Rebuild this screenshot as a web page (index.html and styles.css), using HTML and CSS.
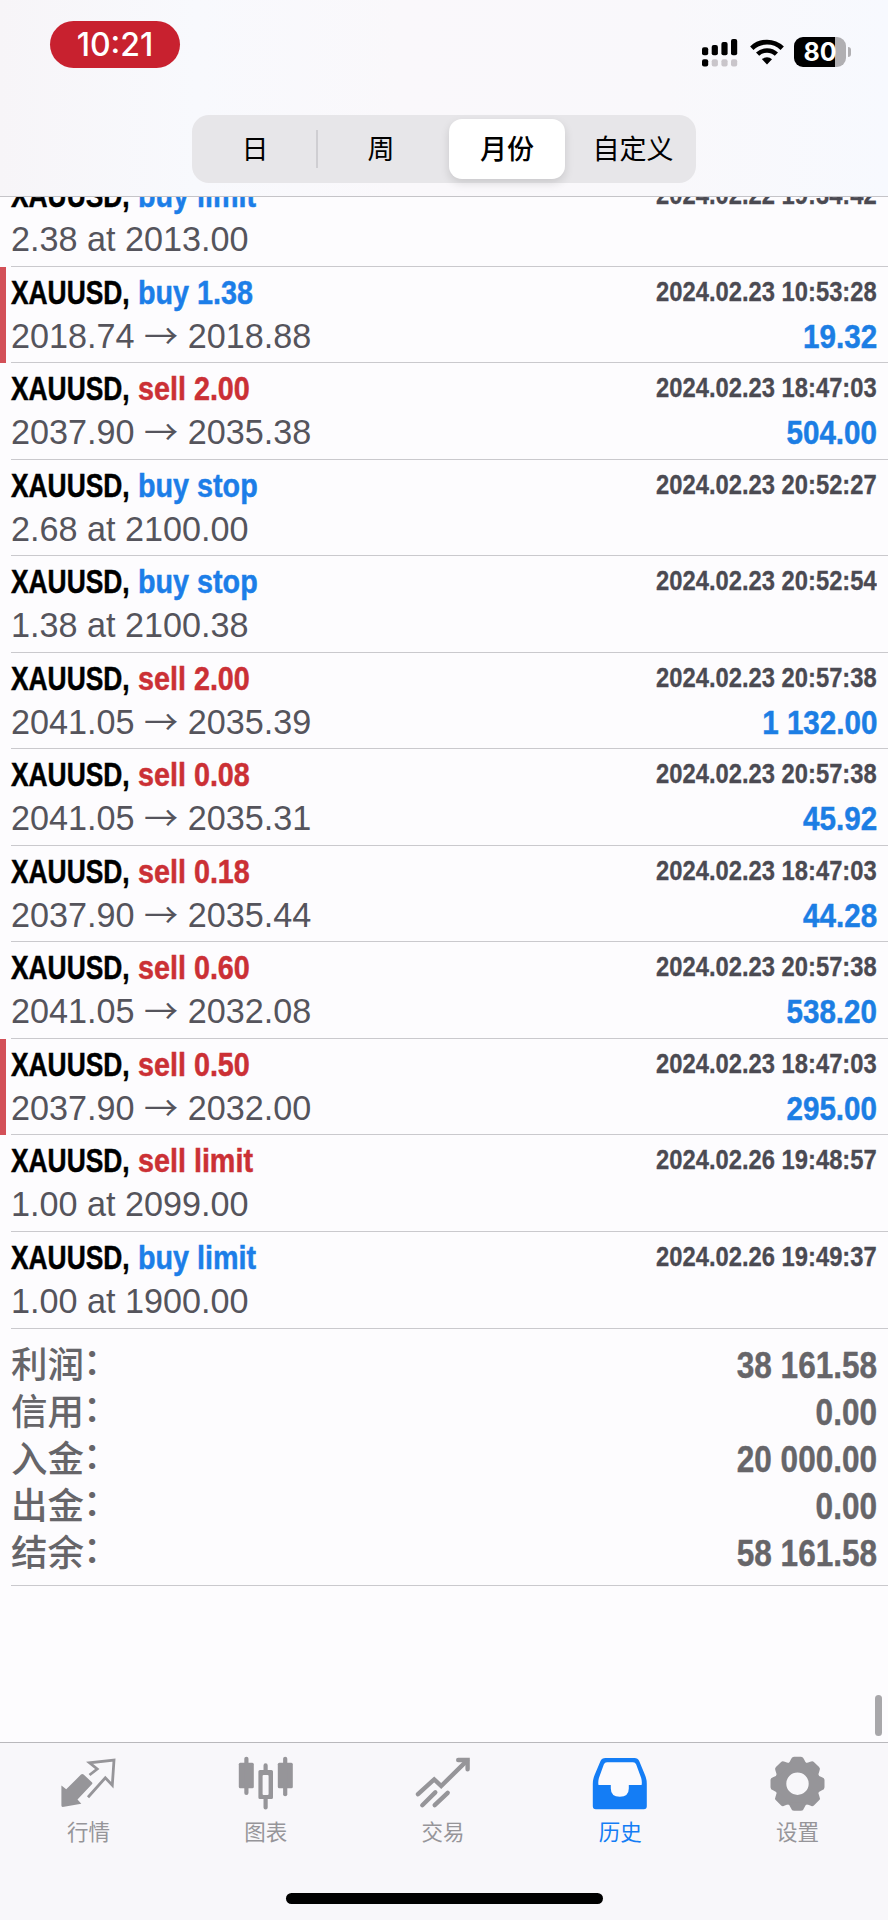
FILE: index.html
```
<!DOCTYPE html>
<html lang="zh-CN">
<head>
    <meta charset="UTF-8">
    <meta name="viewport" content="width=device-width, initial-scale=1.0">
    <title>历史</title>
    <link rel="stylesheet" href="styles.css">
</head>
<body>
    <div class="screen">
        <header class="header">
            <div class="status-bar">
                <div class="clock">10:21</div>
                <div class="status-icons">
                    <svg class="signal" width="36" height="28" viewBox="0 0 36 28">
                        <rect x="0" y="8.3" width="6.2" height="8" rx="2"/>
                        <rect x="9.7" y="6" width="6.2" height="10.3" rx="2"/>
                        <rect x="19.4" y="3" width="6.2" height="13.3" rx="2"/>
                        <rect x="29" y="0" width="6.2" height="16.3" rx="2"/>
                        <rect x="0" y="20.3" width="6.2" height="7.3" rx="2"/>
                        <g fill="#c9c5ca">
                            <rect x="9.7" y="20.3" width="6.2" height="7.3" rx="2"/>
                            <rect x="19.4" y="20.3" width="6.2" height="7.3" rx="2"/>
                            <rect x="29" y="20.3" width="6.2" height="7.3" rx="2"/>
                        </g>
                    </svg>
                    <svg class="wifi" width="34" height="26" viewBox="0 0 34 26">
                        <path d="M1.8 9.2a21.8 21.8 0 0 1 30.4 0" fill="none" stroke="#000" stroke-width="4.8"/>
                        <path d="M7.6 15.2a13.6 13.6 0 0 1 18.8 0" fill="none" stroke="#000" stroke-width="4.6"/>
                        <path d="M17 25.4l-5-5.2a7.4 7.4 0 0 1 10 0z"/>
                    </svg>
                    <div class="battery"><span>80</span></div>
                    <div class="battery-cap"></div>
                </div>
            </div>
            <div class="segments">
                <div class="segment">日</div>
                <div class="segment divided">周</div>
                <div class="segment selected">月份</div>
                <div class="segment">自定义</div>
            </div>
        </header>

        <main class="history">
            <div class="deals" id="deals"></div>
            <div class="summary">
                <div class="summary-row"><span>利润<i>：</i></span><b>38 161.58</b></div>
                <div class="summary-row"><span>信用<i>：</i></span><b>0.00</b></div>
                <div class="summary-row"><span>入金<i>：</i></span><b>20 000.00</b></div>
                <div class="summary-row"><span>出金<i>：</i></span><b>0.00</b></div>
                <div class="summary-row"><span>结余<i>：</i></span><b>58 161.58</b></div>
            </div>
            <div class="scrollbar"></div>
        </main>

        <nav class="tab-bar">
            <div class="tabs">
                <div class="tab">
                    <svg width="56" height="56" viewBox="0 0 56 56">
                        <path d="M28.5 19l7.7-6-7.7-6.2L53 4l-1.7 25.2-7-7.4L27 41.2" fill="none" stroke="currentColor" stroke-width="2.8"/>
                        <path d="M20 18.6q1.4-1 2.6 0l8.3 7.6q1 1 0 2L16.5 43.6l3.8 4.2L1.6 51q-1.2 0-1.2-1.4V29.5l4.8 3.8z" fill="currentColor"/>
                    </svg>
                    <span>行情</span>
                </div>
                <div class="tab">
                    <svg width="56" height="56" viewBox="0 0 56 56" fill="currentColor">
                        <rect x=".8" y="6.7" width="15" height="25.6" rx="1.5"/>
                        <rect x="6.3" y=".7" width="4.2" height="38.3" rx="2.1"/>
                        <path fill-rule="evenodd" d="M22 14h11.4q1.6 0 1.6 1.6v25.8q0 1.6-1.6 1.6H22q-1.6 0-1.6-1.6V15.6q0-1.6 1.6-1.6zm3.6 5q-1 0-1 1v18q0 1 1 1h4q1 0 1-1V20q0-1-1-1z"/>
                        <path d="M25.5 15V9.4a2.1 2.1 0 0 1 4.2 0V15zM25.5 42v9.4a2.1 2.1 0 0 0 4.2 0V42z"/>
                        <rect x="39.8" y="6.7" width="15" height="25.6" rx="1.5"/>
                        <rect x="45.1" y=".7" width="4.2" height="39.6" rx="2.1"/>
                    </svg>
                    <span>图表</span>
                </div>
                <div class="tab">
                    <svg width="56" height="56" viewBox="0 0 56 56" fill="none" stroke="currentColor" stroke-width="4.4" stroke-linecap="round">
                        <path d="M3 38.2L19.2 23.4l7 6.6L52 4.6"/>
                        <path d="M43.2 4h9.4v9.2"/>
                        <path d="M7.3 49.2L20.3 36.4M19.7 49.2l13-12.4"/>
                    </svg>
                    <span>交易</span>
                </div>
                <div class="tab active">
                    <svg width="56" height="56" viewBox="0 0 56 56">
                        <path fill="currentColor" d="M13.5 2h29q3.3 0 4.8 3.2l5.6 13.5q1.9 4.4 1.9 9v22.6q0 3-3 3H3.8q-3 0-3-3V27.7q0-4.6 1.9-9L8.4 5.2Q9.8 2 13.5 2z"/>
                        <path fill="#fbfafd" d="M15 6.3h26q2.3 0 3.2 2.1l4.8 13.2q1.3 3.7.6 7.4H36.8v3.5q0 8.2-9 8.2t-9-8.2V29H6.5q-.7-3.7.6-7.4l4.7-13.2Q12.7 6.3 15 6.3z"/>
                    </svg>
                    <span>历史</span>
                </div>
                <div class="tab">
                    <svg width="56" height="56" viewBox="0 0 56 56">
                        <defs>
                            <path id="tooth" d="M-11-19Q-7.5-21-6.5-24.5Q-5.8-27-3.5-27H3.5Q5.8-27 6.5-24.5Q7.5-21 11-19z"/>
                        </defs>
                        <g transform="translate(28.5 27.7)" fill="currentColor">
                            <circle r="16.3" fill="none" stroke="currentColor" stroke-width="10.2"/>
                            <use href="#tooth"/>
                            <use href="#tooth" transform="rotate(45)"/>
                            <use href="#tooth" transform="rotate(90)"/>
                            <use href="#tooth" transform="rotate(135)"/>
                            <use href="#tooth" transform="rotate(180)"/>
                            <use href="#tooth" transform="rotate(225)"/>
                            <use href="#tooth" transform="rotate(270)"/>
                            <use href="#tooth" transform="rotate(315)"/>
                        </g>
                    </svg>
                    <span>设置</span>
                </div>
            </div>
            <div class="home-indicator"></div>
        </nav>
    </div>

    <script>
        const deals = [
            { type: 'buy', label: 'buy limit', price: '2.38 at 2013.00', time: '2024.02.22 19:34:42' },
            { type: 'buy', label: 'buy 1.38', price: '2018.74', close: '2018.88', time: '2024.02.23 10:53:28', profit: '19.32', marked: true },
            { type: 'sell', label: 'sell 2.00', price: '2037.90', close: '2035.38', time: '2024.02.23 18:47:03', profit: '504.00' },
            { type: 'buy', label: 'buy stop', price: '2.68 at 2100.00', time: '2024.02.23 20:52:27' },
            { type: 'buy', label: 'buy stop', price: '1.38 at 2100.38', time: '2024.02.23 20:52:54' },
            { type: 'sell', label: 'sell 2.00', price: '2041.05', close: '2035.39', time: '2024.02.23 20:57:38', profit: '1 132.00' },
            { type: 'sell', label: 'sell 0.08', price: '2041.05', close: '2035.31', time: '2024.02.23 20:57:38', profit: '45.92' },
            { type: 'sell', label: 'sell 0.18', price: '2037.90', close: '2035.44', time: '2024.02.23 18:47:03', profit: '44.28' },
            { type: 'sell', label: 'sell 0.60', price: '2041.05', close: '2032.08', time: '2024.02.23 20:57:38', profit: '538.20' },
            { type: 'sell', label: 'sell 0.50', price: '2037.90', close: '2032.00', time: '2024.02.23 18:47:03', profit: '295.00', marked: true },
            { type: 'sell', label: 'sell limit', price: '1.00 at 2099.00', time: '2024.02.26 19:48:57' },
            { type: 'buy', label: 'buy limit', price: '1.00 at 1900.00', time: '2024.02.26 19:49:37' }
        ];

        document.getElementById('deals').innerHTML = deals.map(deal => `
            <div class="deal ${deal.marked ? 'marked' : ''}">
                <div class="deal-body">
                    <div class="deal-line">
                        <span class="symbol">XAUUSD,</span>
                        <span class="action ${deal.type}">${deal.label}</span>
                        <span class="time">${deal.time}</span>
                    </div>
                    <div class="deal-line">
                        <span class="price">${deal.price}${deal.close ? ` <span class="arrow">→</span> ${deal.close}` : ''}</span>
                        <span class="profit">${deal.profit || ''}</span>
                    </div>
                </div>
            </div>
        `).join('');
    </script>
</body>
</html>
```
FILE: styles.css
```
* {
    box-sizing: border-box;
}

body {
    margin: 0;
    background: #fdfcfe;
    font-family: "Liberation Sans", "Noto Sans CJK SC", sans-serif;
}

.screen {
    display: flex;
    flex-direction: column;
    height: 1920px;
    overflow: hidden;
}

/* header */
.header {
    flex: none;
    height: 197px;
    border-bottom: 1px solid #c5c4c8;
    background: linear-gradient(90deg, #f7f5f8 0%, #f8f9fd 22%, #faf8fb 45%, #f9f8fb 75%, #f7f9fe 100%);
}

.status-bar {
    display: flex;
    justify-content: space-between;
    height: 115px;
    padding: 20px 37px 0 50px;
}

.clock {
    width: 130px;
    height: 47px;
    margin-top: 1px;
    border-radius: 24px;
    background: #c8212f;
    color: #fff;
    font: 500 32px/47px Inter, sans-serif;
    text-align: center;
}

.status-icons {
    display: flex;
    align-items: flex-start;
    padding-top: 17px;
}

.signal {
    margin-top: 2px;
}

.wifi {
    margin: 2px 10px 0 12px;
}

.battery {
    width: 52px;
    height: 30px;
    border-radius: 9px;
    background: linear-gradient(90deg, #000 41px, #b0afb2 41px);
    color: #fff;
    font: 700 25px/30px Inter, sans-serif;
    text-align: center;
}

.battery-cap {
    width: 3px;
    height: 10px;
    margin: 10px 0 0 2px;
    border-radius: 0 3px 3px 0;
    background: #b0afb2;
}

.segments {
    display: flex;
    width: 504px;
    height: 68px;
    margin: 0 auto;
    padding: 4px 5px;
    border-radius: 17px;
    background: #e7e6e9;
}

.segment {
    position: relative;
    width: 116px;
    margin: 0 5px;
    color: #000;
    font: 400 27px/58px "Noto Sans CJK SC", sans-serif;
    text-align: center;
    white-space: nowrap;
}

.segment:first-child {
    margin-left: 0;
}

.segment:last-child {
    margin-right: 0;
}

.segment.divided::before {
    content: "";
    position: absolute;
    left: -7px;
    top: 11px;
    width: 2px;
    height: 38px;
    background: #cfced2;
}

.segment.selected {
    border-radius: 13px;
    background: #fff;
    box-shadow: 0 4px 10px rgba(0, 0, 0, 0.13);
    font-weight: 500;
}

/* history list */
.history {
    position: relative;
    flex: 1;
    display: flex;
    flex-direction: column;
    min-height: 0;
    overflow: hidden;
}

.deals {
    flex: none;
    margin-top: -27px;
}

.deal {
    height: 96.55px;
    padding-left: 11px;
}

.deal.marked {
    background: linear-gradient(90deg, #d35058 6px, transparent 6px);
}

.deal-body {
    height: 100%;
    padding: 11px 11px 0 0;
    border-bottom: 1px solid #cac9cd;
}

.deal-line {
    display: flex;
    height: 44px;
    line-height: 28px;
    white-space: nowrap;
}

/* condensed bold */
.symbol,
.action,
.time,
.profit {
    font-weight: 700;
    transform-origin: left;
    -webkit-text-stroke: 0.5px currentColor;
}

.symbol {
    width: 127px;
    color: #000;
    font-size: 34px;
    transform: scaleX(0.775);
}

.action {
    font-size: 34px;
    transform: scaleX(0.845);
}

.time,
.profit {
    margin-left: auto;
    transform-origin: right;
}

.time {
    color: #4b4a52;
    font-size: 27px;
    line-height: 29px;
    transform: scaleX(0.88);
    -webkit-text-stroke-width: 0.3px;
}

.profit {
    color: #1c7ee4;
    font-size: 34px;
    line-height: 29px;
    transform: scaleX(0.87);
}

.price {
    color: #55545c;
    font-size: 34.2px;
}

.arrow {
    font-family: "Noto Sans CJK SC", sans-serif;
    font-weight: 400;
    line-height: 1px;
    vertical-align: -1px;
}

.buy {
    color: #1c7ee8;
}

.sell {
    color: #cb3035;
}

/* totals */
.summary {
    flex: none;
    height: 257px;
    margin-left: 11px;
    padding: 11px 11px 0 0;
    border-bottom: 1px solid #cac9cd;
    color: #666569;
}

.summary-row {
    display: flex;
    justify-content: space-between;
    height: 47.2px;
}

.summary-row span {
    font: 500 36.5px/46px "Noto Sans CJK SC", sans-serif;
}

/* lift the colon to mid-height */
.summary-row i {
    margin-left: -1px;
    font-style: normal;
    line-height: 1px;
    vertical-align: 3px;
}

.summary-row b {
    font-size: 36px;
    line-height: 51px;
    transform: scaleX(0.877);
    transform-origin: right;
    -webkit-text-stroke: 0.4px currentColor;
}

.scrollbar {
    position: absolute;
    right: 6px;
    bottom: 6px;
    width: 7px;
    height: 41px;
    border-radius: 4px;
    background: #a8a7aa;
}

/* tab bar */
.tab-bar {
    flex: none;
    height: 178px;
    border-top: 1px solid #b9b8bc;
    background: #f8f7fa;
}

.tabs {
    display: flex;
    height: 150px;
    padding: 13px 2px 0 0;
}

.tab {
    flex: 1;
    display: flex;
    flex-direction: column;
    align-items: center;
    color: #969599;
}

.tab span {
    margin-top: 4px;
    font: 400 21.5px/30px "Noto Sans CJK SC", sans-serif;
}

.tab.active {
    color: #147df5;
}

.home-indicator {
    width: 317px;
    height: 11px;
    margin: 0 auto;
    border-radius: 6px;
    background: #000;
}
```
